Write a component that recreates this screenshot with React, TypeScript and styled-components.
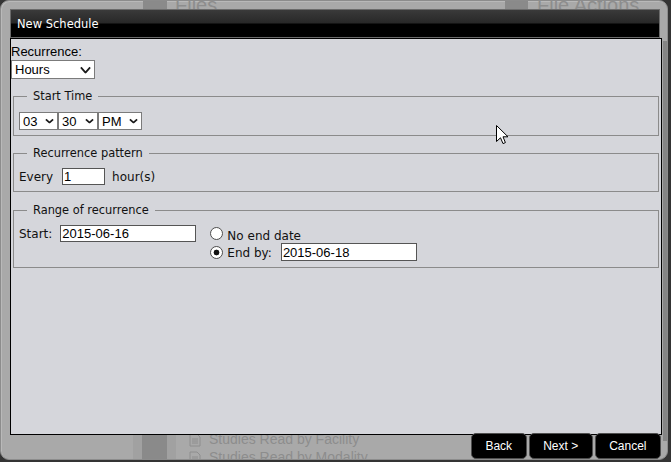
import React from "react";
import styled, { createGlobalStyle } from "styled-components";

const Global = createGlobalStyle`
  html, body { margin: 0; padding: 0; background: #333; }
  #root { width: 671px; height: 462px; }
`;

const Screen = styled.div`
  position: relative;
  width: 671px;
  height: 462px;
  overflow: hidden;
  background: #343434;
`;

const Window = styled.div`
  position: relative;
  box-sizing: border-box;
  width: 668px;
  height: 460px;
  border: 1px solid #8c8c8c;
  border-radius: 9px;
  background: #a9a9a9;
  box-shadow: inset 1px 1px 0 #b9b9b9;
  padding: 8px 0 0 9px;
  display: flex;
  flex-direction: column;
  overflow: hidden;
`;

/* faint remnants of the application behind the modal frame */
const Ghost = styled.div`
  position: absolute;
  inset: 0;
  z-index: 0;
  pointer-events: none;
`;

const GhostBlock = styled.div<{ $x: number; $y: number; $w: number; $h: number; $c: string }>`
  position: absolute;
  left: ${(p) => p.$x}px;
  top: ${(p) => p.$y}px;
  width: ${(p) => p.$w}px;
  height: ${(p) => p.$h}px;
  background: ${(p) => p.$c};
`;

const GhostText = styled.div<{ $x: number; $y: number; $size: number }>`
  position: absolute;
  left: ${(p) => p.$x}px;
  top: ${(p) => p.$y}px;
  font: ${(p) => p.$size}px/1.15 "Liberation Sans", Arial, sans-serif;
  color: #8d8d8d;
  white-space: nowrap;
`;

const GhostIcon = styled.svg<{ $x: number; $y: number }>`
  position: absolute;
  left: ${(p) => p.$x}px;
  top: ${(p) => p.$y}px;
`;

const TitleBar = styled.div`
  position: relative;
  z-index: 1;
  box-sizing: border-box;
  width: 650px;
  height: 29px;
  border: 1px solid #6b6b6b;
  background: linear-gradient(to bottom, #3a3a3a 0px, #282828 13px, #000 14px, #000 100%);
  color: #fff;
  font: 11.5px/26px "DejaVu Sans", Verdana, sans-serif;
  padding: 1px 0 0 6px;
`;

const Panel = styled.div`
  position: relative;
  z-index: 1;
  box-sizing: border-box;
  width: 652px;
  height: 397px;
  border: 1px solid #000;
  background: #d5d6db;
  padding: 5px 1px 0 0;
  color: #000;
`;

const FieldLabel = styled.div`
  font: 13px/16px "Liberation Sans", Arial, sans-serif;
  color: #000;
`;

const SelectWrap = styled.span`
  position: relative;
  display: inline-flex;
`;

const Select = styled.select<{ $w: number; $h: number }>`
  appearance: none;
  -webkit-appearance: none;
  box-sizing: border-box;
  width: ${(p) => p.$w}px;
  height: ${(p) => p.$h}px;
  margin: 0;
  padding: 0 0 0 3px;
  border: 1px solid #7b7b7b;
  border-radius: 0;
  background: #fff;
  color: #000;
  font: 13px "Liberation Sans", Arial, sans-serif;
  outline: none;
`;

const Chevron = styled.svg`
  position: absolute;
  right: 4px;
  top: 50%;
  transform: translateY(-50%);
  pointer-events: none;
`;

const Group = styled.fieldset<{ $mt: number; $pt: number; $pb: number }>`
  margin: ${(p) => p.$mt}px 1px 0 2px;
  padding: ${(p) => p.$pt}px 5px ${(p) => p.$pb}px 5px;
  border: 1px solid #8b8b8b;
  min-width: 0;
`;

const Legend = styled.legend`
  margin-left: 8px;
  padding: 0 6px;
  font: 11.4px/14px "DejaVu Sans", Verdana, sans-serif;
  color: #111;
`;

const Row = styled.div<{ $h: number; $gap?: number }>`
  display: flex;
  align-items: center;
  height: ${(p) => p.$h}px;
  gap: ${(p) => p.$gap ?? 0}px;
`;

const Text = styled.span<{ $ml?: number; $pt?: number }>`
  font: 12px/14px "DejaVu Sans", Verdana, sans-serif;
  color: #111;
  margin-left: ${(p) => p.$ml ?? 0}px;
  padding-top: ${(p) => p.$pt ?? 0}px;
  white-space: nowrap;
`;

const Input = styled.input<{ $w: number; $h: number; $ml: number }>`
  box-sizing: border-box;
  width: ${(p) => p.$w}px;
  height: ${(p) => p.$h}px;
  margin: 0 0 0 ${(p) => p.$ml}px;
  padding: 0 1px;
  border: 1px solid #555;
  border-radius: 0;
  background: #fff;
  color: #000;
  font: 13px "Liberation Sans", Arial, sans-serif;
  outline: none;
`;

const RangeLayout = styled.div`
  display: flex;
  align-items: flex-start;
`;

const RadioColumn = styled.div`
  display: flex;
  flex-direction: column;
  gap: 1px;
  margin-left: 14px;
`;

const Radio = styled.input`
  appearance: none;
  -webkit-appearance: none;
  box-sizing: border-box;
  width: 13px;
  height: 13px;
  margin: 0;
  border: 1px solid #4d4d4d;
  border-radius: 50%;
  background: #fff;
  &:checked {
    background: radial-gradient(circle, #111 0 2.6px, #fff 3.2px);
  }
`;

const Footer = styled.div`
  position: relative;
  z-index: 2;
  display: flex;
  justify-content: flex-end;
  gap: 2px;
  width: 651px;
  margin-top: -2px;
`;

const Button = styled.button`
  box-sizing: border-box;
  height: 26px;
  padding: 0 13.5px;
  background: #000;
  color: #fff;
  border: 1px solid #4f4f4f;
  border-radius: 5px;
  font: 12px "Liberation Sans", Arial, sans-serif;
  cursor: pointer;
`;

const Cursor = styled.svg`
  position: absolute;
  left: 496px;
  top: 125px;
  z-index: 5;
`;

const ChevronIcon: React.FC<{ size: number }> = ({ size }) => {
  const h = Math.round(size * 0.6);
  return (
    <Chevron width={size} height={h} viewBox={`0 0 ${size} ${h}`}>
      <polyline
        points={`0.9,0.9 ${size / 2},${h - 0.9} ${size - 0.9},0.9`}
        fill="none"
        stroke="#1a1a1a"
        strokeWidth="1.8"
      />
    </Chevron>
  );
};

const Dropdown: React.FC<{ w: number; h: number; value: string; options: string[]; chevron: number }> = ({
  w,
  h,
  value,
  options,
  chevron,
}) => (
  <SelectWrap>
    <Select $w={w} $h={h} defaultValue={value}>
      {options.map((o) => (
        <option key={o} value={o}>
          {o}
        </option>
      ))}
    </Select>
    <ChevronIcon size={chevron} />
  </SelectWrap>
);

const DocIcon: React.FC<{ x: number; y: number }> = ({ x, y }) => (
  <GhostIcon $x={x} $y={y} width="12" height="14" viewBox="0 0 12 14">
    <path d="M1 1h7l3 3v9H1z" fill="none" stroke="#8e8e8e" />
    <path d="M3 6h6M3 8h6M3 10h6" stroke="#8e8e8e" />
  </GhostIcon>
);

export default function App() {
  return (
    <>
      <Global />
      <Screen>
        <Window>
          <Ghost>
            <GhostBlock $x={142} $y={-1} $w={24} $h={10} $c="#8a8a8a" />
            <GhostBlock $x={504} $y={-1} $w={23} $h={10} $c="#8a8a8a" />
            <GhostText $x={174} $y={-7} $size={20}>Files</GhostText>
            <GhostText $x={536} $y={-7} $size={20}>File Actions</GhostText>
            <GhostBlock $x={132} $y={433} $w={9} $h={27} $c="#a1a1a1" />
            <GhostBlock $x={141} $y={433} $w={25} $h={27} $c="#8a8a8a" />
            <GhostBlock $x={166} $y={433} $w={9} $h={27} $c="#a1a1a1" />
            <DocIcon x={188} y={432} />
            <DocIcon x={188} y={450} />
            <GhostText $x={208} $y={430} $size={14}>Studies Read by Facility</GhostText>
            <GhostText $x={208} $y={448} $size={14}>Studies Read by Modality</GhostText>
            <GhostBlock $x={662} $y={40} $w={4} $h={400} $c="#858585" />
          </Ghost>

          <TitleBar>New Schedule</TitleBar>

          <Panel>
            <FieldLabel>Recurrence:</FieldLabel>
            <Dropdown w={84} h={19} value="Hours" options={["Minutes", "Hours", "Days", "Weeks", "Months"]} chevron={11} />

            <Group $mt={10} $pt={9} $pb={5}>
              <Legend>Start Time</Legend>
              <Row $h={18}>
                <Dropdown w={39} h={18} value="03" options={["01", "02", "03", "04", "05", "06", "07", "08", "09", "10", "11", "12"]} chevron={9} />
                <Dropdown w={40} h={18} value="30" options={["00", "15", "30", "45"]} chevron={9} />
                <Dropdown w={44} h={18} value="PM" options={["AM", "PM"]} chevron={9} />
              </Row>
            </Group>

            <Group $mt={10} $pt={8} $pb={6}>
              <Legend>Recurrence pattern</Legend>
              <Row $h={17}>
                <Text>Every</Text>
                <Input $w={43} $h={17} $ml={9} defaultValue="1" />
                <Text $ml={7}>hour(s)</Text>
              </Row>
            </Group>

            <Group $mt={11} $pt={8} $pb={6}>
              <Legend>Range of recurrence</Legend>
              <RangeLayout>
                <Row $h={17}>
                  <Text>Start:</Text>
                  <Input $w={136} $h={17} $ml={8} defaultValue="2015-06-16" />
                </Row>
                <RadioColumn>
                  <Row $h={17} $gap={4}>
                    <Radio type="radio" name="end" />
                    <Text $pt={4}>No end date</Text>
                  </Row>
                  <Row $h={18} $gap={4}>
                    <Radio type="radio" name="end" defaultChecked />
                    <Text $pt={1}>End by:</Text>
                    <Input $w={136} $h={18} $ml={5} defaultValue="2015-06-18" />
                  </Row>
                </RadioColumn>
              </RangeLayout>
            </Group>
          </Panel>

          <Footer>
            <Button>Back</Button>
            <Button>Next &gt;</Button>
            <Button>Cancel</Button>
          </Footer>
        </Window>

        <Cursor width="13" height="20" viewBox="0 0 13 20">
          <path d="M0.5 0.5 L0.5 16.5 L4.5 12.8 L7 18.6 L9.4 17.6 L7 11.8 L12 11.8 Z" fill="#fff" stroke="#000" strokeWidth="1" strokeLinejoin="miter" />
        </Cursor>
      </Screen>
    </>
  );
}
